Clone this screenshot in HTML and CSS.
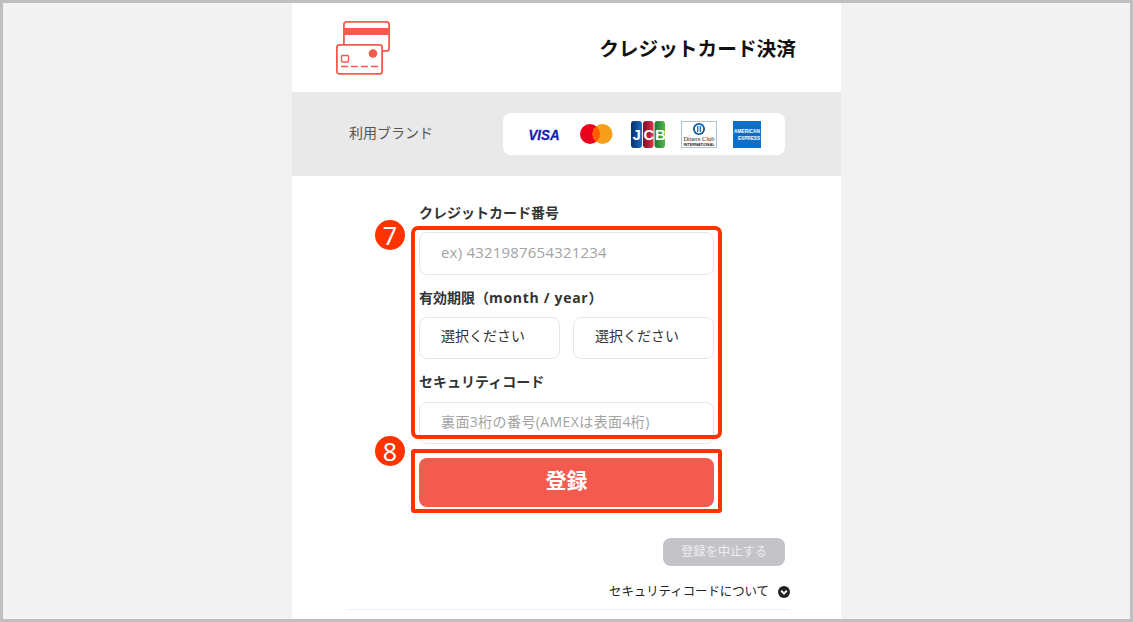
FILE: index.html
```html
<!DOCTYPE html>
<html lang="ja">
<head>
  <meta charset="UTF-8">
  <meta name="viewport" content="width=device-width, initial-scale=1.0">
  <title>クレジットカード決済</title>
  <link rel="stylesheet" href="styles.css">
</head>
<body>
  <div class="frame">
    <div class="panel">
      <header class="header">
        <svg class="card-icon" width="54" height="54" viewBox="0 0 54 54" fill="none" stroke="#f45b4e" stroke-width="1.8">
          <rect x="7.9" y="0.9" width="45.2" height="29" rx="2.5"/>
          <rect x="8" y="7" width="45" height="7" fill="#f45b4e" stroke="none"/>
          <rect x="0.9" y="23.9" width="45.2" height="29" rx="2.5" fill="#fff"/>
          <circle cx="37" cy="32.5" r="4.3" fill="#f45b4e" stroke="none"/>
          <rect x="5.5" y="34.5" width="7" height="6.5" rx="1" stroke-width="1.4"/>
          <path d="M5 45.5h7M15 45.5h7M25 45.5h7M35 45.5h7" stroke-width="1.4"/>
        </svg>
        <h1 class="title">クレジットカード決済</h1>
      </header>

      <section class="brands">
        <span class="brands-label">利用ブランド</span>
        <div class="brands-box">
          <svg class="logo logo-visa" width="38" height="24" viewBox="0 0 38 24">
            <text x="0.5" y="18" class="visa-text" textLength="31" lengthAdjust="spacingAndGlyphs">VISA</text>
          </svg>
          <svg class="logo" width="37" height="22" viewBox="0 0 37 22">
            <circle cx="12" cy="11" r="10" fill="#eb001b"/>
            <circle cx="24.5" cy="11" r="10" fill="#f79e1b"/>
            <path d="M18.25 3.2a10 10 0 0 1 0 15.6a10 10 0 0 1 0-15.6z" fill="#ff5f00"/>
          </svg>
          <svg class="logo" width="34" height="27" viewBox="0 0 34 27">
            <defs>
              <linearGradient id="jcb-blue" x1="0" x2="1" y1="0" y2="0">
                <stop offset="0" stop-color="#0a2f6e"/>
                <stop offset="1" stop-color="#1a6cc0"/>
              </linearGradient>
              <linearGradient id="jcb-red" x1="0" x2="1" y1="0" y2="0">
                <stop offset="0" stop-color="#7a1028"/>
                <stop offset="1" stop-color="#e0304a"/>
              </linearGradient>
              <linearGradient id="jcb-green" x1="0" x2="1" y1="0" y2="0">
                <stop offset="0" stop-color="#1c7a3a"/>
                <stop offset="1" stop-color="#55b848"/>
              </linearGradient>
            </defs>
            <rect x="0" y="0" width="11" height="27" rx="3" fill="url(#jcb-blue)"/>
            <rect x="12" y="0" width="10.5" height="27" rx="3" fill="url(#jcb-red)"/>
            <rect x="23.5" y="0" width="10.5" height="27" rx="3" fill="url(#jcb-green)"/>
            <text x="1.5" y="18.5" class="jcb-text">J</text>
            <text x="12.5" y="18.5" class="jcb-text">C</text>
            <text x="24" y="18.5" class="jcb-text">B</text>
          </svg>
          <svg class="logo" width="36" height="27" viewBox="0 0 36 27">
            <rect x="0.5" y="0.5" width="35" height="26" fill="#fff" stroke="#a7c4dc"/>
            <circle cx="18" cy="8" r="6" fill="#0b5ea8"/>
            <circle cx="18" cy="8" r="4.2" fill="#fff"/>
            <rect x="16.1" y="5" width="1.2" height="6" fill="#0b5ea8"/>
            <rect x="18.7" y="5" width="1.2" height="6" fill="#0b5ea8"/>
            <text x="18" y="20" class="diners-text" textLength="31" lengthAdjust="spacingAndGlyphs">Diners Club</text>
            <text x="18" y="24.6" class="diners-small" textLength="31" lengthAdjust="spacingAndGlyphs">INTERNATIONAL</text>
          </svg>
          <svg class="logo" width="28" height="27" viewBox="0 0 28 27">
            <rect width="28" height="27" fill="#0f6fc6"/>
            <text x="14" y="12" class="amex-text" textLength="26" lengthAdjust="spacingAndGlyphs">AMERICAN</text>
            <text x="16" y="19" class="amex-text" textLength="22" lengthAdjust="spacingAndGlyphs">EXPRESS</text>
          </svg>
        </div>
      </section>

      <form class="card-form">
        <label class="field-label first">クレジットカード番号</label>
        <input class="field number" type="text" placeholder="ex) 4321987654321234">

        <label class="field-label">有効期限（<span class="latin">month / year</span>）</label>
        <div class="select-row">
          <select class="field select"><option>選択ください</option></select>
          <select class="field select"><option>選択ください</option></select>
        </div>

        <label class="field-label">セキュリティコード</label>
        <input class="field code" type="text" placeholder="裏面3桁の番号(AMEXは表面4桁)">

        <button class="submit" type="button">登録</button>
      </form>

      <div class="cancel-row">
        <a class="cancel" href="#">登録を中止する</a>
      </div>
      <div class="about-row">
        <span>セキュリティコードについて</span>
        <svg width="12" height="12" viewBox="0 0 12 12">
          <circle cx="6" cy="6" r="6" fill="#222"/>
          <path d="M3.2 4.8L6 7.6l2.8-2.8" fill="none" stroke="#fff" stroke-width="2"/>
        </svg>
      </div>
      <div class="rule"></div>
    </div>

    <!-- annotations on top of the screenshot -->
    <div class="mark mark-fields"></div>
    <div class="mark mark-submit"></div>
    <div class="badge badge-7">7</div>
    <div class="badge badge-8">8</div>
  </div>
</body>
</html>
```

FILE: styles.css
```css
* {
  box-sizing: border-box;
}
html, body {
  margin: 0;
  height: 622px;
  overflow: hidden;
}
body {
  font-family: "Open Sans", "Noto Sans CJK JP", sans-serif;
  color: #222;
}
.frame {
  position: relative;
  height: 622px;
  border: 3px solid #bfbfbf;
  background-color: #f2f2f2;
  overflow: hidden;
}
.panel {
  width: 549px;
  height: 100%;
  margin: 0 auto;
  background-color: #fff;
  overflow: hidden;
}
.header {
  height: 89px;
  padding: 18px 45px 0 44px;
  display: flex;
  justify-content: space-between;
  align-items: flex-start;
}
.title {
  margin: 14px 0 0;
  font-size: 19.7px;
  line-height: 28px;
  font-weight: 700;
  color: #111;
}
.brands {
  height: 84px;
  padding: 0 56px 0 57px;
  background-color: #e9e9e9;
  display: flex;
  justify-content: space-between;
  align-items: center;
}
.brands-label {
  font-size: 14px;
  color: #555;
  position: relative;
  top: -2px;
}
.brands-box {
  width: 282px;
  height: 42px;
  padding-left: 25px;
  background-color: #fff;
  border-radius: 8px;
  display: flex;
  align-items: center;
  gap: 16px;
}
.logo {
  display: block;
  flex: none;
}
.logo-visa {
  margin-right: -4px;
}
.visa-text {
  font: italic 700 15px "Liberation Sans", sans-serif;
  fill: #1020b0;
  stroke: #1020b0;
  stroke-width: 0.3px;
}
.jcb-text {
  font: 700 15px "Liberation Sans", sans-serif;
  fill: #fff;
}
.diners-text {
  font: 7px "Liberation Serif", serif;
  fill: #222;
  text-anchor: middle;
}
.diners-small {
  font: 700 3.2px "Liberation Sans", sans-serif;
  fill: #222;
  text-anchor: middle;
}
.amex-text {
  font: 700 5px "Liberation Sans", sans-serif;
  fill: #fff;
  text-anchor: middle;
}
.card-form {
  width: 295px;
  margin-left: 127px;
  padding-top: 27px;
  display: flex;
  flex-direction: column;
}
.field-label {
  display: block;
  margin-top: 13px;
  font-size: 14px;
  line-height: 20px;
  font-weight: 700;
  color: #333;
}
.field-label.first {
  margin-top: 0;
}
.latin {
  letter-spacing: 0.7px;
}
.field {
  display: block;
  width: 100%;
  height: 43px;
  margin-top: 9px;
  padding: 0 21px 3px;
  border: 1px solid #e6e6e6;
  border-radius: 8px;
  background-color: #fff;
  font-family: inherit;
  font-size: 14px;
  color: #333;
  outline: none;
}
.field::placeholder {
  color: #a3a3a3;
  opacity: 1;
}
.field.number {
  font-size: 15px;
  letter-spacing: 0.2px;
}
.field.code {
  height: 42px;
  margin-top: 10px;
  padding-bottom: 4px;
  letter-spacing: 0.4px;
}
.select-row {
  display: flex;
  gap: 13px;
}
.select {
  flex: 1;
  width: 141px;
  height: 42px;
  padding-bottom: 5px;
  appearance: none;
  -webkit-appearance: none;
}
.submit {
  height: 49px;
  margin-top: 14px;
  padding-bottom: 8px;
  border: none;
  border-radius: 8px;
  background-color: #f45b4e;
  color: #fff;
  font-family: inherit;
  font-size: 21px;
  font-weight: 700;
}
.cancel-row {
  margin-top: 31px;
  padding-right: 56px;
  display: flex;
  justify-content: flex-end;
}
.cancel {
  width: 122px;
  height: 28px;
  border-radius: 8px;
  background-color: #c4c3c8;
  color: #eee;
  font-size: 12.3px;
  line-height: 28px;
  text-align: center;
  text-decoration: none;
}
.about-row {
  margin-top: 17px;
  padding-right: 51px;
  display: flex;
  justify-content: flex-end;
  align-items: center;
  gap: 9px;
  font-size: 12.4px;
  line-height: 18px;
  color: #222;
}
.rule {
  height: 1px;
  margin: 8px 51px 0 54px;
  background-color: #f0f0f0;
}
.mark {
  position: absolute;
  left: 408px;
  width: 311px;
  border: 4px solid #ff3300;
  border-radius: 7px;
}
.mark-fields {
  top: 223px;
  height: 213px;
}
.mark-submit {
  top: 446px;
  height: 64px;
  border-radius: 3px;
}
.badge {
  position: absolute;
  left: 372px;
  width: 30px;
  height: 30px;
  border-radius: 50%;
  background-color: #ff3300;
  color: #fff;
  font-family: "Noto Sans", sans-serif;
  font-size: 25px;
  line-height: 30px;
  text-align: center;
}
.badge-7 {
  top: 217px;
}
.badge-8 {
  top: 433px;
}
```
